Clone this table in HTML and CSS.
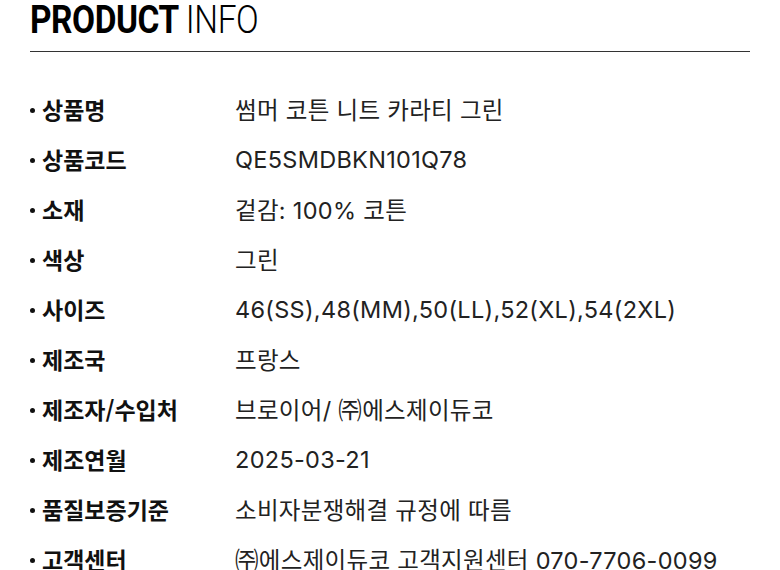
FILE: index.html
```html
<!DOCTYPE html>
<html lang="ko">
<head>
    <meta charset="UTF-8">
    <meta name="viewport" content="width=device-width, initial-scale=1.0">
    <title>PRODUCT INFO</title>
    <link rel="stylesheet" href="styles.css">
</head>
<body>
    <div class="info-container">
        <div class="info-header">
            <h2 class="info-title"><b>PRODUCT</b> <span>INFO</span></h2>
        </div>
        <ul class="info-list">
            <li><div class="label">상품명</div><div class="value">썸머 코튼 니트 카라티 그린</div></li>
            <li><div class="label">상품코드</div><div class="value">QE5SMDBKN101Q78</div></li>
            <li><div class="label">소재</div><div class="value">겉감: 100% 코튼</div></li>
            <li><div class="label">색상</div><div class="value">그린</div></li>
            <li><div class="label">사이즈</div><div class="value">46(SS),48(MM),50(LL),52(XL),54(2XL)</div></li>
            <li><div class="label">제조국</div><div class="value">프랑스</div></li>
            <li><div class="label">제조자/수입처</div><div class="value">브로이어/ ㈜에스제이듀코</div></li>
            <li><div class="label">제조연월</div><div class="value">2025-03-21</div></li>
            <li><div class="label">품질보증기준</div><div class="value">소비자분쟁해결 규정에 따름</div></li>
            <li><div class="label">고객센터</div><div class="value">㈜에스제이듀코 고객지원센터 070-7706-0099</div></li>
        </ul>
    </div>
</body>
</html>
```

FILE: styles.css
```css
body {
    margin: 0;
    background-color: #fff;
    font-family: Inter, "Noto Sans CJK KR", "Noto Sans", sans-serif;
    color: #111;
}

.info-container {
    padding: 0 30px;
}

.info-header {
    padding-bottom: 11px;
    border-bottom: 1px solid #333;
}

.info-title {
    display: inline-block;
    margin: 0;
    font-family: Roboto, "Liberation Sans", sans-serif;
    font-size: 38px;
    line-height: 40px;
    letter-spacing: -0.5px;
    color: #000;
    transform: scaleX(0.88);
    transform-origin: left center;
}
.info-title b {
    font-weight: 700;
}
.info-title span {
    font-weight: 300;
}

.info-list {
    list-style: none;
    margin: 32px 0 0;
    padding: 0;
}

.info-list li {
    display: flex;
    align-items: center;
    height: 50px;
    font-size: 23.5px;
}

.label {
    width: 205px;
    font-family: "Noto Sans CJK KR", sans-serif;
    font-size: 23px;
    font-weight: 700;
    color: #111;
    display: flex;
    align-items: center;
}
.label::before {
    content: "";
    width: 5px;
    height: 5px;
    border-radius: 50%;
    background: #111;
    margin: 2px 7px 0 0;
}

.value {
    color: #222;
    font-weight: 400;
    letter-spacing: 0.3px;
}
```
